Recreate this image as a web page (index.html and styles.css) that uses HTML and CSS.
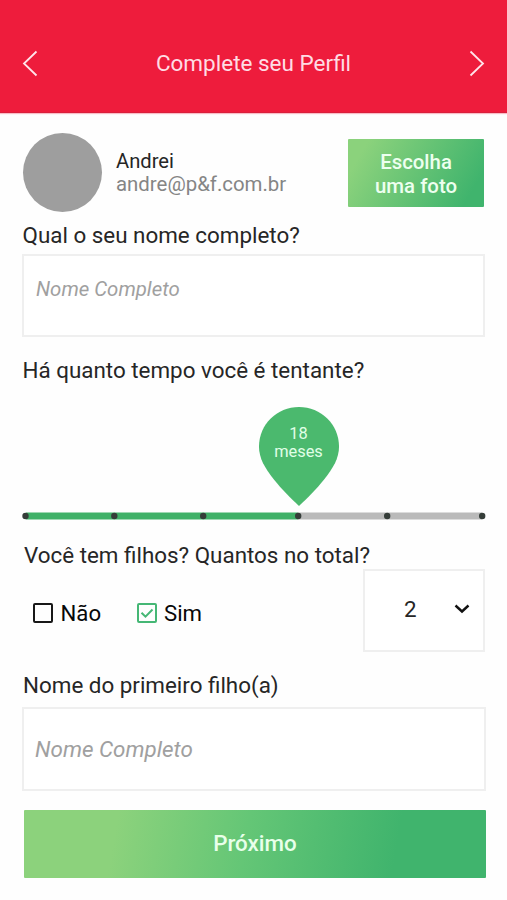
FILE: index.html
```html
<!DOCTYPE html>
<html lang="pt-BR">
<head>
<meta charset="utf-8">
<title>Complete seu Perfil</title>
<link rel="stylesheet" href="styles.css">
</head>
<body>
<header class="topbar">
  <svg class="chevron" width="16" height="28" viewBox="0 0 16 28"><path d="M14.5 2.5 2 14.5l12.5 12"/></svg>
  <h1 class="title">Complete seu Perfil</h1>
  <svg class="chevron" width="16" height="28" viewBox="0 0 16 28"><path d="m1.5 2.5 12.5 12-12.5 12"/></svg>
</header>
<main class="form">
  <section class="profile">
    <div class="avatar"></div>
    <div class="person">
      <div class="name">Andrei</div>
      <div class="email">andre@p&amp;f.com.br</div>
    </div>
    <div class="photo-button">Escolha<br>uma foto</div>
  </section>
  <div class="label label-name">Qual o seu nome completo?</div>
  <div class="field field-name">Nome Completo</div>
  <div class="label label-time">Há quanto tempo você é tentante?</div>
  <section class="slider">
    <div class="pin">
      <svg class="pin-shape" width="80" height="99" viewBox="0 0 80 99"><path d="M40 0C18 0 0 17.5 0 39.5c0 12 6 21.500 14.500 32.500C22 81.500 32 91.500 40 99c8-7.500 18-17.500 25.500-27C74 61 80 51.500 80 39.500 80 17.500 62 0 40 0z"/></svg>
      <div class="pin-text">18<br>meses</div>
    </div>
    <svg class="track" width="464" height="10" viewBox="0 0 464 10">
      <path class="rest" d="M276 5h184"/>
      <path class="done" d="M4 5h272"/>
      <g class="stops"><circle cx="3.500" cy="5" r="3.200"/><circle cx="92.300" cy="5" r="3.200"/><circle cx="181.200" cy="5" r="3.200"/><circle cx="276.200" cy="5" r="3.200"/><circle cx="365.200" cy="5" r="3.200"/><circle cx="460.200" cy="5" r="3.200"/></g>
    </svg>
  </section>
  <div class="label label-children">Você tem filhos? Quantos no total?</div>
  <section class="children">
    <div class="option option-no"><svg width="20" height="20" viewBox="0 0 20 20"><rect x="1" y="1" width="18" height="18" rx="1"/></svg><span class="no">Não</span></div>
    <div class="option option-yes"><svg width="20" height="20" viewBox="0 0 20 20"><rect x="1" y="1" width="18" height="18" rx="1"/><path d="m4.500 9.700 4 4 7-7.200"/></svg><span class="yes">Sim</span></div>
    <div class="select"><span class="amount">2</span><svg width="16" height="10" viewBox="0 0 16 10"><path d="m1.500 1.500 6.500 6 6.500-6"/></svg></div>
  </section>
  <div class="label label-child">Nome do primeiro filho(a)</div>
  <div class="field field-child">Nome Completo</div>
  <div class="next-button">Próximo</div>
</main>
</body>
</html>
```

FILE: styles.css
```css
* { box-sizing: border-box; }
body { margin: 0; background: #fefefe; color: #262626; font-family: Roboto, "Liberation Sans", sans-serif; }
.topbar { display: flex; align-items: flex-start; justify-content: space-between; height: 113px; padding: 49px 22px 0; background: #ee1c3c; border-bottom: 1px solid #d91f3c; box-shadow: 0 1px 1px #f9bcc6; }
.chevron { fill: none; stroke: #ffe4ea; stroke-width: 1.8; }
.title { margin: 0; font-size: 22.5px; font-weight: 400; line-height: 29px; color: #ffdce4; }
.form { padding: 20px 21px 0 22px; }
.profile { display: flex; height: 87px; }
.avatar { width: 79px; height: 79px; border-radius: 50%; background: #9e9e9e; margin-left: 0.5px; }
.person { flex: 1; padding: 17px 0 0 14.5px; font-size: 20.4px; line-height: 23px; white-space: nowrap; }
.name { font-size: 20.2px; }
.email { color: #858585; }
.photo-button { width: 136px; height: 68px; margin: 6px 2px 0 0; padding-top: 11px; border-radius: 1px; background: linear-gradient(120deg, #8bd27c 12%, #40b46d 88%); color: #edffef; font-size: 20.4px; font-weight: 500; line-height: 24px; text-align: center; }
.label { font-size: 22.4px; line-height: 30px; white-space: nowrap; }
.label-name { margin: 0 0 4px 0.5px; }
.field { border: 2px solid #efefef; color: #a0a0a0; font-style: italic; white-space: nowrap; background: #fff; }
.field-name { width: 463px; height: 83px; padding: 19px 12px; font-size: 20.4px; line-height: 28px; }
.label-time { margin: 18px 0 1px 0.5px; }
.slider { display: flex; flex-direction: column; height: 149px; padding-top: 21px; }
.pin { display: grid; width: 80px; height: 99px; margin-left: 236.500px; }
.pin-shape, .pin-text { grid-area: 1 / 1; }
.pin-shape { fill: #4bb96e; }
.pin-text { padding-top: 17.5px; color: #e0ffe7; font-size: 16.4px; line-height: 18.5px; text-align: center; }
.track { display: block; margin-top: 5px; }
.track path { stroke-width: 7; }
.rest { stroke: #bababa; }
.done { stroke: #40b168; }
.stops { fill: #353d39; }
.label-children { margin: 5px 0 0 2px; }
.children { display: flex; height: 83px; margin-top: -1px; }
.option { display: flex; align-items: center; height: 30px; margin-top: 29px; color: #080808; font-size: 22.2px; gap: 7.5px; line-height: 30px; }
.option svg { fill: none; stroke: #181818; stroke-width: 2; }
.option-no { width: 93px; margin-left: 11px; }
.option-no + .option-yes { margin-left: 10.5px; }
.option-yes svg { stroke: #45b775; }
.select { display: flex; align-items: center; width: 122px; height: 83px; margin: 0 1px 0 auto; padding: 0 13px 4px 39px; border: 2px solid #efefef; background: #fff; font-size: 22.4px; justify-content: space-between; }
.select svg { fill: none; stroke: #111; stroke-width: 2.400; }
.label-child { margin: 18px 0 7px 1px; }
.field-child { width: 464px; height: 84px; padding: 26px 11px; font-size: 22.4px; line-height: 28px; }
.next-button { width: 462px; height: 68px; margin: 18.5px 0 0 2px; border-radius: 1px; background: linear-gradient(100deg, #8cd27c 20%, #64c676 48%, #40b46d 80%); color: #e8ffea; font-size: 22.4px; font-weight: 500; line-height: 67px; text-align: center; }
```
